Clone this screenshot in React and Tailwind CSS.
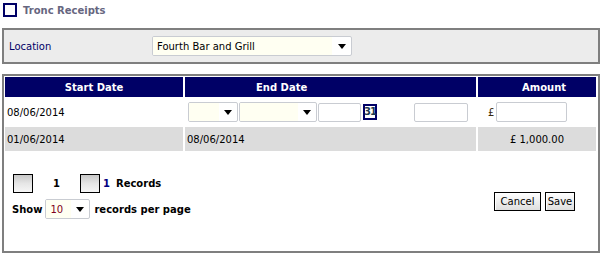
import React from "react";

const font = { fontFamily: '"DejaVu Sans", Verdana, sans-serif' };

function Arrow() {
  return (
    <svg width="8" height="5" viewBox="0 0 8 5">
      <polygon points="0,0 8,0 4,5" fill="#000" />
    </svg>
  );
}

function FakeSelect({ className, value, textClass = "text-black", arrowW = "w-[18px]" }) {
  return (
    <div className={`flex border border-[#c9ccd2] rounded-[2px] bg-white overflow-hidden ${className}`}>
      <div className={`flex-1 bg-[#fffff2] flex items-center pl-[4px] ${textClass}`}>{value}</div>
      <div className={`${arrowW} flex items-center justify-center`}>
        <Arrow />
      </div>
    </div>
  );
}

function TextBox({ className }) {
  return <div className={`border border-[#c9ccd2] rounded-[2px] bg-white ${className}`} />;
}

function PagerButton() {
  return (
    <div className="w-[20px] h-[19px] border border-black bg-gradient-to-b from-[#c8c8c8] via-[#e6e6e6] to-[#f6f6f6]" />
  );
}

function Button({ children, className }) {
  return (
    <button
      className={`h-[19px] border border-black bg-gradient-to-b from-white to-[#dedede] shadow-[inset_1px_1px_0_#fff] text-[10px] leading-none text-black flex items-center justify-center ${className}`}
    >
      {children}
    </button>
  );
}

export default function App() {
  return (
    <div className="w-[603px] h-[255px] bg-white text-[10px] text-black pt-[3px] overflow-hidden" style={font}>
      <div className="flex items-center pl-[3px] h-[14px]">
        <div className="w-[14px] h-[14px] border-2 border-[#000066]" />
        <span className="ml-[6px] font-bold text-[#66667f]">Tronc Receipts</span>
      </div>

      <div className="mt-[11px] ml-[2px] w-[598px] h-[36px] border-2 border-[#7f7f7f] bg-[#ececec] flex items-center">
        <span className="w-[148px] pl-[5px] text-[#000066]">Location</span>
        <FakeSelect className="w-[200px] h-[20px]" value="Fourth Bar and Grill" arrowW="w-[19px]" />
      </div>

      <div className="mt-[10px] ml-[2px] w-[598px] h-[179px] border-2 border-[#7f7f7f] pt-[1px] pl-[1px]">
        <div className="grid grid-cols-[178px_291px_118px] gap-x-[2px] gap-y-[2px]">
          <div className="h-[20px] bg-[#000066] text-white font-bold flex items-center justify-center">Start Date</div>
          <div className="h-[20px] bg-[#000066] text-white font-bold flex items-center pl-[71px]">End Date</div>
          <div className="h-[20px] bg-[#000066] text-white font-bold flex items-center pl-[44px]">Amount</div>

          <div className="h-[26px] flex items-center pl-[2px]">08/06/2014</div>
          <div className="h-[26px] flex items-center pl-[3px]">
            <FakeSelect className="w-[50px] h-[20px]" value="" />
            <FakeSelect className="ml-[1px] w-[78px] h-[20px]" value="" />
            <TextBox className="ml-[1px] w-[43px] h-[19px]" />
            <div className="ml-[2px] w-[14px] h-[16px] border-2 border-[#000066] bg-white flex items-center justify-center text-[10px] font-bold text-[#1d3a4f] leading-none tracking-[-1px]">
              31
            </div>
            <TextBox className="ml-[37px] w-[54px] h-[19px]" />
          </div>
          <div className="h-[26px] flex items-center pl-[10px]">
            <span className="text-[#3a2a10]">£</span>
            <TextBox className="ml-[2px] w-[71px] h-[20px]" />
          </div>

          <div className="h-[24px] bg-[#dcdcdc] flex items-center pl-[2px]">01/06/2014</div>
          <div className="h-[24px] bg-[#dcdcdc] flex items-center pl-[2px]">08/06/2014</div>
          <div className="h-[24px] bg-[#dcdcdc] flex items-center justify-center">£ 1,000.00</div>
        </div>

        <div className="mt-[23px] flex justify-between">
          <div>
            <div className="h-[19px] flex items-center pl-[8px] font-bold">
              <PagerButton />
              <span className="ml-[20px]">1</span>
              <div className="ml-[20px]">
                <PagerButton />
              </div>
              <span className="ml-[3px] text-[#000080]">1</span>
              <span className="ml-[6px]">Records</span>
            </div>
            <div className="mt-[6px] h-[20px] flex items-center pl-[7px] font-bold">
              <span>Show</span>
              <FakeSelect
                className="ml-[3px] w-[45px] h-[20px] font-normal"
                value="10"
                textClass="text-[#800020] pl-[2px]"
              />
              <span className="ml-[4px]">records per page</span>
            </div>
          </div>
          <div className="mt-[18px] mr-[23px] flex items-start gap-[4px]">
            <Button className="w-[47px]">Cancel</Button>
            <Button className="w-[30px]">Save</Button>
          </div>
        </div>
      </div>
    </div>
  );
}
